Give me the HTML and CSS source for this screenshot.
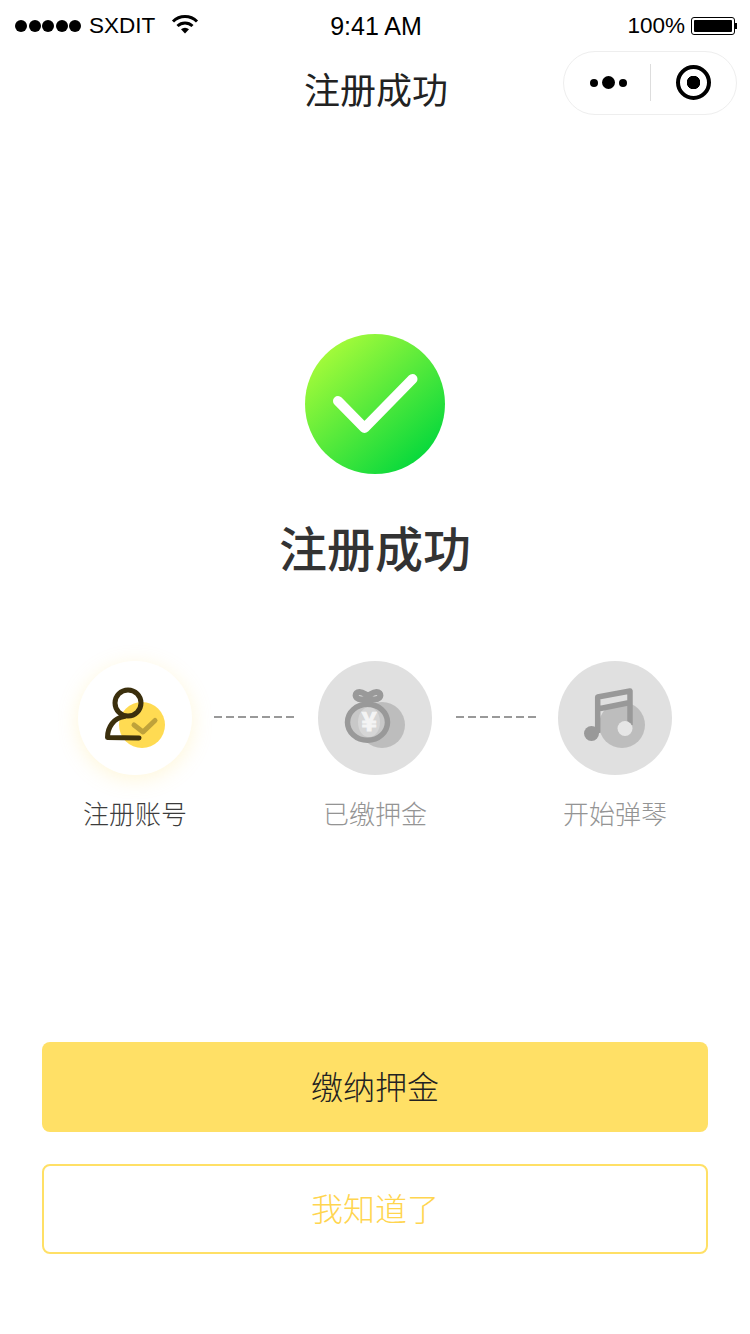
FILE: index.html
```html
<!DOCTYPE html>
<html lang="zh-CN">
<head>
    <meta charset="UTF-8">
    <meta name="viewport" content="width=device-width, initial-scale=1.0">
    <title>注册成功</title>
    <link rel="stylesheet" href="styles.css">
</head>
<body>
    <div class="status-bar">
        <div class="status-left">
            <div class="signal"><i></i><i></i><i></i><i></i><i></i></div>
            <span>SXDIT</span>
            <svg class="wifi" width="28" height="20" viewBox="0 0 28 20">
                <path d="M2 7.500a17 17 0 0 1 24 0" fill="none" stroke="#000" stroke-width="3"/>
                <path d="M6.500 12a11 11 0 0 1 15 0" fill="none" stroke="#000" stroke-width="3"/>
                <path d="M10 15.200a6 6 0 0 1 8 0L14 19.500z" fill="#000"/>
            </svg>
        </div>
        <div class="status-time">9:41 AM</div>
        <div class="status-right">
            <span>100%</span>
            <div class="battery"><div class="battery-level"></div></div>
            <div class="battery-tip"></div>
        </div>
    </div>

    <div class="nav-bar">
        <div></div>
        <div class="nav-title">注册成功</div>
        <div class="capsule">
            <div class="capsule-dots"><i></i><i class="big"></i><i></i></div>
            <div class="capsule-line"></div>
            <div class="capsule-target"></div>
        </div>
    </div>

    <div class="result">
        <svg class="result-icon" width="140" height="140" viewBox="0 0 140 140">
            <defs>
                <linearGradient id="okGrad" x1="0.15" y1="0.1" x2="0.85" y2="0.9">
                    <stop offset="0" stop-color="#a6fb3a"/>
                    <stop offset="1" stop-color="#05d83c"/>
                </linearGradient>
            </defs>
            <circle cx="70" cy="70" r="70" fill="url(#okGrad)"/>
            <path d="M33 67L59.500 94L107.500 45" fill="none" stroke="#fff" stroke-width="10" stroke-linecap="round" stroke-linejoin="round"/>
        </svg>
        <h1 class="result-title">注册成功</h1>
    </div>

    <div class="steps">
        <div class="step active">
            <div class="step-circle">
                <svg width="114" height="114" viewBox="0 0 114 114">
                    <circle cx="64" cy="64" r="23" fill="#ffdb52"/>
                    <path d="M56 64L65 71L77 59.500" fill="none" stroke="#bfa23a" stroke-width="5" stroke-linecap="round" stroke-linejoin="round"/>
                    <circle cx="50" cy="42" r="13" fill="none" stroke="#3b2f0d" stroke-width="5"/>
                    <path d="M46 55.500C36 57 29.500 66 29.500 76.500L61 77" fill="none" stroke="#3b2f0d" stroke-width="5" stroke-linecap="round" stroke-linejoin="round"/>
                </svg>
            </div>
            <div class="step-label">注册账号</div>
        </div>
        <div class="step-dash"></div>
        <div class="step">
            <div class="step-circle">
                <svg width="114" height="114" viewBox="0 0 114 114">
                    <circle cx="64" cy="64" r="23" fill="#bdbdbd"/>
                    <ellipse cx="49.500" cy="61.200" rx="20" ry="18" fill="#c8c8c8"/>
                    <ellipse cx="51" cy="61.200" rx="11" ry="15" fill="#d6d6d6"/>
                    <ellipse cx="49.500" cy="61.200" rx="20" ry="18" fill="none" stroke="#999" stroke-width="5.500"/>
                    <path d="M43 38.500C36 38 36 31 41.500 31C45 31 47 33 50 34.500C53 33 55 31 58.500 31C64 31 64 38 57 38.500z" fill="#d6d6d6" stroke="#999" stroke-width="6" stroke-linejoin="round"/>
                    <text class="yen" x="51.200" y="69.500" text-anchor="middle">¥</text>
                </svg>
            </div>
            <div class="step-label">已缴押金</div>
        </div>
        <div class="step-dash step-dash-last"></div>
        <div class="step">
            <div class="step-circle">
                <svg width="114" height="114" viewBox="0 0 114 114">
                    <circle cx="64" cy="64" r="23" fill="#bdbdbd"/>
                    <path d="M39.500 37L72 30.500V42L39.500 48.500z" fill="#e0e0e0"/>
                    <path d="M39.700 72V36L72 30V64M39.700 48L72 41.500" fill="none" stroke="#999" stroke-width="5.500" stroke-linejoin="round"/>
                    <circle cx="33.500" cy="72.500" r="7.500" fill="#999"/>
                    <circle cx="67" cy="67.500" r="7.500" fill="#e6e6e6"/>
                </svg>
            </div>
            <div class="step-label">开始弹琴</div>
        </div>
    </div>

    <div class="actions">
        <button class="btn btn-primary">缴纳押金</button>
        <button class="btn btn-outline">我知道了</button>
    </div>
</body>
</html>
```

FILE: styles.css
```css
body {
    margin: 0;
    width: 750px;
    height: 1334px;
    overflow: hidden;
    background: #fff;
    font-family: "Noto Sans CJK SC", "Liberation Sans", sans-serif;
    color: #333;
}
.status-bar {
    display: grid;
    grid-template-columns: 1fr auto 1fr;
    align-items: center;
    height: 52px;
    padding: 0 13px 0 15px;
    box-sizing: border-box;
    font-family: "Liberation Sans", sans-serif;
    font-size: 22.500px;
    color: #000;
}
.status-left,
.status-right {
    display: flex;
    align-items: center;
}
.status-right {
    justify-content: flex-end;
}
.status-left span {
    margin-left: 8px;
}
.status-time {
    font-size: 25px;
}
.signal {
    display: flex;
    gap: 1.500px;
}
.signal i {
    width: 12px;
    height: 12px;
    border-radius: 50%;
    background: #000;
}
.wifi {
    margin-left: 16px;
    margin-top: -4px;
}
.battery {
    width: 44px;
    height: 18px;
    margin-left: 6px;
    padding: 2px;
    box-sizing: border-box;
    border: 1px solid #000;
    border-radius: 3px;
}
.battery-level {
    height: 100%;
    background: #000;
    border-radius: 1px;
}
.battery-tip {
    width: 2px;
    height: 6px;
    background: #000;
}
.nav-bar {
    display: grid;
    grid-template-columns: 1fr auto 1fr;
    align-items: center;
    height: 64px;
    padding-right: 13px;
    margin-left: 13px;
    margin-top: -1px;
}
.nav-title {
    font-size: 36px;
    font-weight: 400;
    margin-top: 10px;
    margin-left: 2px;
    color: #222;
}
.capsule {
    justify-self: end;
    display: flex;
    align-items: center;
    width: 174px;
    height: 64px;
    margin-top: -1px;
    box-sizing: border-box;
    border: 1px solid #eee;
    border-radius: 32px;
}
.capsule-dots {
    display: flex;
    align-items: center;
    gap: 4px;
    margin-left: 26px;
}
.capsule-dots i {
    width: 8px;
    height: 8px;
    border-radius: 50%;
    background: #000;
}
.capsule-dots i.big {
    width: 13px;
    height: 13px;
}
.capsule-line {
    width: 1px;
    height: 37px;
    margin-left: 23px;
    background: #ddd;
}
.capsule-target {
    width: 35px;
    height: 35px;
    margin-left: 25px;
    box-sizing: border-box;
    border: 4px solid #000;
    border-radius: 50%;
    background: radial-gradient(circle, #000 0 6.500px, #fff 7px);
}
.result {
    display: flex;
    flex-direction: column;
    align-items: center;
    padding-top: 219px;
}
.result-icon {
    display: block;
}
.result-title {
    margin: 37px 0 0;
    font-size: 48px;
    font-weight: 500;
    line-height: 70px;
    color: #333;
}
.steps {
    display: flex;
    align-items: flex-start;
    margin-top: 80px;
    padding-left: 78px;
}
.step {
    width: 114px;
    display: flex;
    flex-direction: column;
    align-items: center;
}
.step-circle {
    width: 114px;
    height: 114px;
    border-radius: 50%;
    background: #e0e0e0;
}
.step-circle svg {
    display: block;
}
.step.active .step-circle {
    background: #fff;
    box-shadow: 0 4px 20px rgba(255, 224, 102, 0.25);
}
.step-label {
    margin-top: 19px;
    font-size: 26px;
    font-weight: 300;
    line-height: 38px;
    white-space: nowrap;
    color: #949494;
}
.step.active .step-label {
    color: #3c3c3c;
}
.step-dash {
    width: 80px;
    height: 2px;
    margin: 55px 24px 0 22px;
    background: repeating-linear-gradient(90deg, #999 0 8px, transparent 8px 12px);
}
.step-dash-last {
    margin: 55px 22px 0 24px;
}
.yen {
    font-family: "Noto Sans CJK SC", sans-serif;
    font-size: 26px;
    font-weight: 700;
    fill: #f4f4f4;
    stroke: #f4f4f4;
    stroke-width: 1px;
}
.actions {
    display: flex;
    flex-direction: column;
    gap: 32px;
    margin-top: 210px;
    padding: 0 42px;
}
.btn {
    height: 90px;
    padding: 0 0 4px;
    border-radius: 8px;
    font-family: inherit;
    font-size: 32px;
    font-weight: 300;
}
.btn-primary {
    border: none;
    background: #ffe066;
    color: #222;
}
.btn-outline {
    border: 2px solid #ffe066;
    background: #fff;
    color: #ffd54f;
}
```
